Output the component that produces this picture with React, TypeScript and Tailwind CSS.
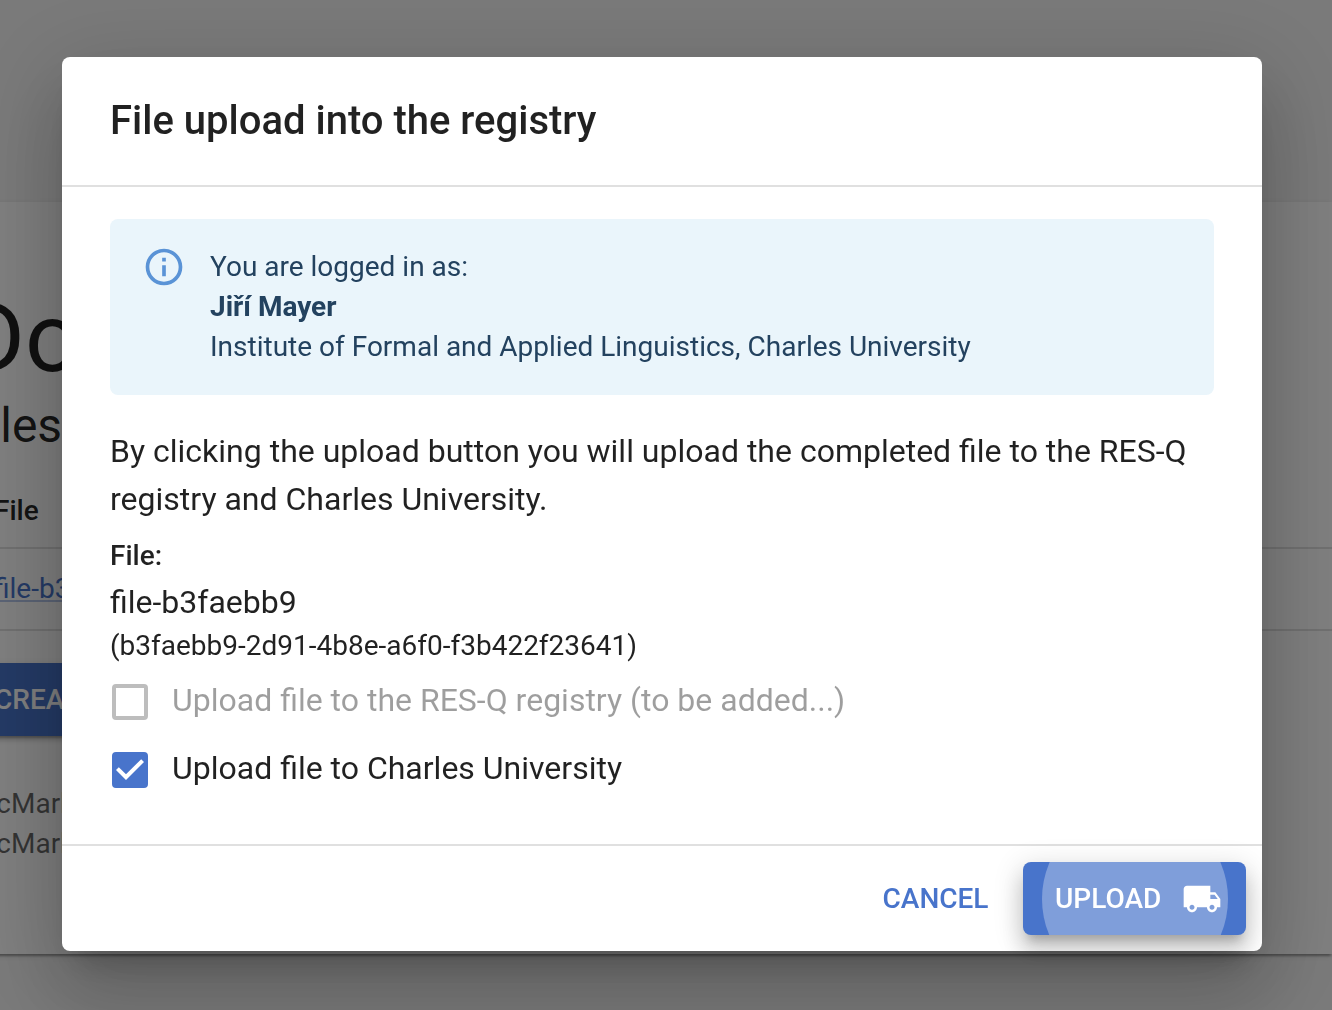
import { useState } from "react";
import type { ReactNode } from "react";

function InfoIcon() {
  return (
    <svg viewBox="0 0 24 24" className="size-11 fill-[#5a93d6]" aria-hidden="true">
      <path d="M11 7h2v2h-2zM11 11h2v6h-2zM12 2C6.48 2 2 6.48 2 12s4.48 10 10 10 10-4.48 10-10S17.52 2 12 2zm0 18c-4.41 0-8-3.59-8-8s3.59-8 8-8 8 3.59 8 8-3.59 8-8 8z" />
    </svg>
  );
}

function TruckIcon() {
  return (
    <svg viewBox="0 0 24 24" className="relative -mr-2 size-10 fill-white" aria-hidden="true">
      <path d="M20 8h-3V4H3c-1.1 0-2 .9-2 2v11h2c0 1.66 1.34 3 3 3s3-1.34 3-3h6c0 1.66 1.34 3 3 3s3-1.34 3-3h2v-5l-3-4zM6 18.5c-.83 0-1.5-.67-1.5-1.5s.67-1.5 1.5-1.5 1.5.67 1.5 1.5-.67 1.5-1.5 1.5zm13.5-9l1.96 2.5H17V9.5h2.5zm-1.5 9c-.83 0-1.5-.67-1.5-1.5s.67-1.5 1.5-1.5 1.5.67 1.5 1.5-.67 1.5-1.5 1.5z" />
    </svg>
  );
}

type CheckRowProps = {
  checked: boolean;
  disabled?: boolean;
  onChange?: (checked: boolean) => void;
  children: ReactNode;
};

function CheckRow({ checked, disabled = false, onChange, children }: CheckRowProps) {
  return (
    <label className="flex items-start gap-6 py-[10px] pl-[2px] has-disabled:text-black/38">
      <span className="relative mt-2 flex size-9 shrink-0">
        <input
          type="checkbox"
          checked={checked}
          disabled={disabled}
          onChange={(e) => onChange?.(e.target.checked)}
          className="size-9 appearance-none rounded-[4px] border-4 border-black/60 checked:border-[#4874cb] checked:bg-[#4874cb] disabled:border-black/26"
        />
        {checked && (
          <svg viewBox="3 3 18 18" className="pointer-events-none absolute inset-0 size-9 fill-white" aria-hidden="true">
            <path d="M10 17l-5-5 1.41-1.41L10 14.17l7.59-7.59L19 8z" />
          </svg>
        )}
      </span>
      <span>{children}</span>
    </label>
  );
}

function FilesPage() {
  return (
    <main className="min-h-screen overflow-hidden bg-[#f5f5f5] pt-[202px] pb-14" aria-hidden="true">
      <div className="-ml-[38px] bg-white pt-20 pb-[90px] shadow-[0_4px_2px_-2px_rgba(0,0,0,0.2),0_2px_2px_0_rgba(0,0,0,0.14),0_2px_6px_0_rgba(0,0,0,0.12)]">
        <h1 className="text-[96px] leading-[112px]">DocMarker</h1>
        <h2 className="mb-[17px] text-5xl leading-[64px]">Files</h2>
        <table className="w-full border-collapse text-left text-[28px]">
          <thead>
            <tr className="border-b-2 border-[#e0e0e0]">
              <th className="px-8 py-3 leading-[48px] font-medium">File</th>
            </tr>
          </thead>
          <tbody>
            <tr className="border-b-2 border-[#e0e0e0]">
              <td className="px-8 py-5 leading-[40px]">
                <a href="#file" tabIndex={-1} className="text-[#4874cb] underline decoration-[#4874cb]/40 decoration-2 underline-offset-2">
                  file-b3faebb9
                </a>
              </td>
            </tr>
          </tbody>
        </table>
        <button
          type="button"
          tabIndex={-1}
          className="mt-8 block rounded-lg bg-[#4874cb] px-8 py-3 text-[28px] leading-[49px] font-medium text-white uppercase shadow-[0_6px_2px_-4px_rgba(0,0,0,0.2),0_4px_4px_0_rgba(0,0,0,0.14),0_2px_10px_0_rgba(0,0,0,0.12)]"
        >
          Create
        </button>
        <p className="mt-12 text-[28px] leading-[40px] text-black/60">
          DocMarker
          <br />
          DocMarker
        </p>
      </div>
    </main>
  );
}

export default function App() {
  const [toUniversity, setToUniversity] = useState(true);

  return (
    <div className="relative font-[Roboto,sans-serif] text-black/87">
      <FilesPage />
      <div className="fixed inset-0 flex items-start overflow-hidden bg-black/50 pt-[57px] pr-[70px] pl-[62px]">
        <div
          role="dialog"
          aria-modal="true"
          aria-labelledby="upload-title"
          className="mx-auto w-full max-w-[1200px] rounded-lg bg-white shadow-[0_22px_30px_-14px_rgba(0,0,0,0.2),0_48px_76px_6px_rgba(0,0,0,0.14),0_18px_92px_16px_rgba(0,0,0,0.12)]"
        >
          <h2 id="upload-title" className="px-12 py-8 text-[40px] leading-[64px] font-medium">
            File upload into the registry
          </h2>

          <div className="border-y-2 border-black/12 px-12 pt-8 pb-[42px] text-[32px] leading-[48px]">
            <div role="status" className="mb-8 flex gap-6 rounded-lg bg-[#eaf5fb] px-8 py-3 text-[28px] leading-[40px] text-[#23425f]">
              <div className="py-[14px]">
                <InfoIcon />
              </div>
              <div className="py-4">
                <p>You are logged in as:</p>
                <p className="font-bold">Jiří Mayer</p>
                <p>Institute of Formal and Applied Linguistics, Charles University</p>
              </div>
            </div>

            <p className="mb-[11px]">
              By clicking the upload button you will upload the completed file to the RES-Q registry and Charles
              University.
            </p>
            <h3 className="text-[28px] leading-[44px] font-medium">File:</h3>
            <p>file-b3faebb9</p>
            <p className="text-[28px] leading-[40px]">(b3faebb9-2d91-4b8e-a6f0-f3b422f23641)</p>

            <CheckRow checked={false} disabled>
              Upload file to the RES-Q registry (to be added...)
            </CheckRow>
            <CheckRow checked={toUniversity} onChange={setToUniversity}>
              Upload file to Charles University
            </CheckRow>
          </div>

          <div className="flex justify-end gap-4 p-4 text-[28px] leading-[49px] font-medium">
            <button type="button" className="min-w-[143px] rounded-lg px-4 py-3 text-[#4874cb] uppercase">
              Cancel
            </button>
            <button
              type="button"
              className="relative flex min-w-[223px] items-center justify-between gap-4 overflow-hidden rounded-lg bg-[#4874cb] px-8 py-3 text-white uppercase shadow-[0_10px_10px_-6px_rgba(0,0,0,0.2),0_16px_20px_2px_rgba(0,0,0,0.14),0_6px_28px_4px_rgba(0,0,0,0.12)]"
            >
              <span className="absolute top-1/2 left-1/2 size-[186px] -translate-1/2 rounded-full bg-white/30" />
              <span className="relative">Upload</span>
              <TruckIcon />
            </button>
          </div>
        </div>
      </div>
    </div>
  );
}
